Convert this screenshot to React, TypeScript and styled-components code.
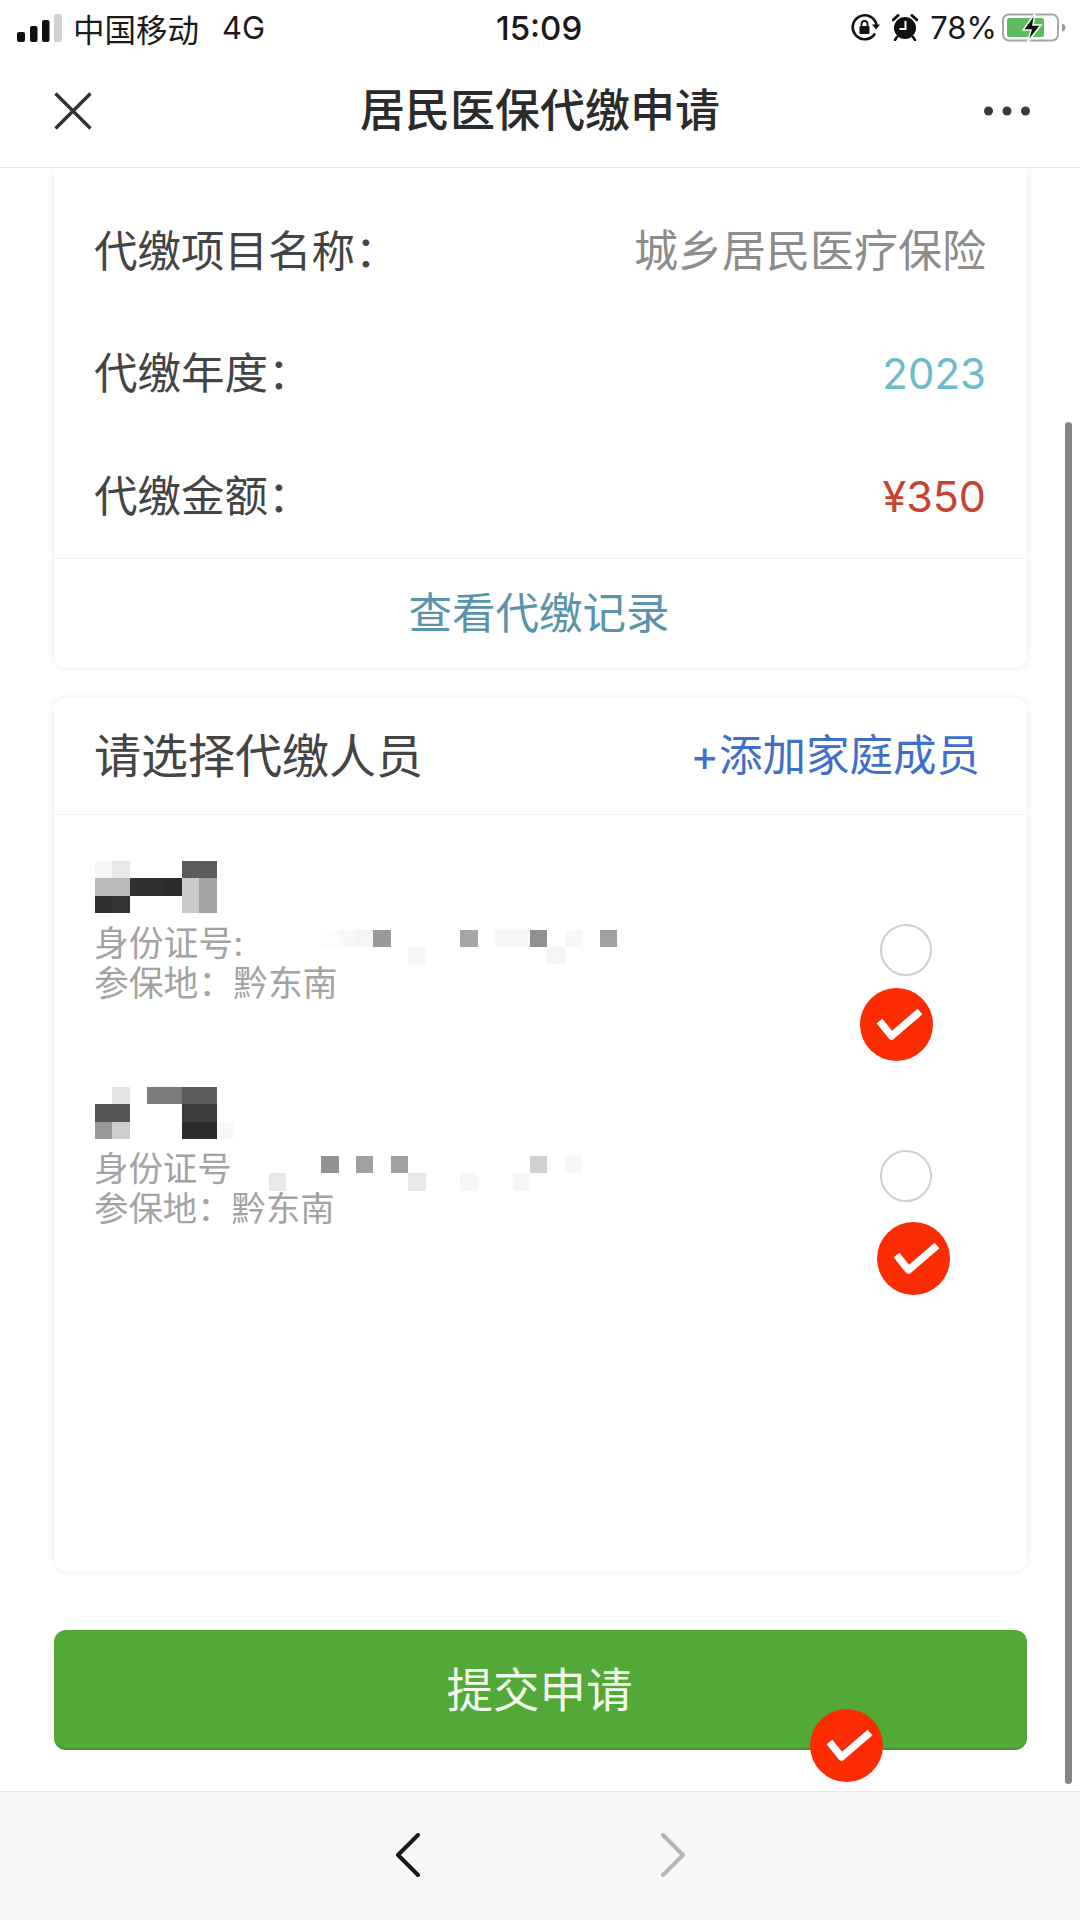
import styled, { createGlobalStyle } from "styled-components";

const GlobalStyle = createGlobalStyle`
  html, body {
    margin: 0;
    padding: 0;
    background: #fff;
  }
  * {
    box-sizing: border-box;
  }
`;

const Page = styled.div`
  position: relative;
  display: flex;
  flex-direction: column;
  width: 1080px;
  height: 1920px;
  overflow: hidden;
  background: #fff;
  font-family: Inter, "Noto Sans CJK SC", sans-serif;
`;

const StatusBar = styled.div`
  display: flex;
  align-items: center;
  height: 55px;
  padding: 0 14px 0 17px;
  color: #1a1a1a;
  font-size: 30px;
`;
const StatusLeft = styled.div`
  flex: 1;
  display: flex;
  align-items: center;
`;
const Carrier = styled.span`
  margin-left: 10px;
  font-size: 31.5px;
`;
const Network = styled.span`
  margin-left: 23px;
  font-size: 31px;
`;
const Clock = styled.span`
  position: absolute;
  left: 496px;
  font-size: 33px;
  font-weight: 500;
`;
const StatusRight = styled.div`
  display: flex;
  align-items: center;
`;
const Percent = styled.span`
  margin: 0 5px 0 12px;
  font-size: 31px;
`;

const NavBar = styled.div`
  display: flex;
  align-items: center;
  justify-content: space-between;
  height: 113px;
  padding: 0 50px 0 54px;
  border-bottom: 1px solid #e6e6e6;
`;
const NavTitle = styled.div`
  margin-left: 4px;
  padding-bottom: 8px;
  font-size: 45px;
  font-weight: 500;
  color: #2b2b2b;
`;

const Content = styled.div`
  flex: 1;
  display: flex;
  flex-direction: column;
  padding: 0 53px 0 54px;
`;
const Card = styled.div`
  background: #fff;
  border-radius: 0 0 12px 12px;
  box-shadow: 0 0 7px rgba(0, 0, 0, 0.09);
  clip-path: inset(0 -12px -12px -12px);
`;
const InfoRows = styled.div`
  padding: 19px 41px 3px 40px;
`;
const InfoRow = styled.div`
  display: flex;
  align-items: center;
  justify-content: space-between;
  height: 122.5px;
  font-size: 43.5px;
  color: #444;
`;
const InfoValue = styled.span<{ $color: string; $size?: number; $drop?: number }>`
  padding-top: ${(p) => p.$drop ?? 0}px;
  color: ${(p) => p.$color};
  font-size: ${(p) => p.$size ?? 44}px;
`;
const RecordLink = styled.div`
  display: flex;
  align-items: center;
  justify-content: center;
  height: 110px;
  padding: 0 3px 6px 0;
  border-top: 1px solid #f0f0f0;
  font-size: 43.5px;
  color: #5a94ab;
`;

const MemberCard = styled.div`
  display: flex;
  flex-direction: column;
  height: 873px;
  margin-top: 30px;
  background: #fff;
  border-radius: 12px;
  box-shadow: 0 0 7px rgba(0, 0, 0, 0.09);
`;
const MemberHeader = styled.div`
  display: flex;
  align-items: center;
  justify-content: space-between;
  height: 117px;
  padding: 0 47px 7px 40px;
  border-bottom: 1px solid #f7f4ea;
`;
const MemberTitle = styled.span`
  font-size: 47px;
  color: #444;
`;
const AddMember = styled.span`
  font-size: 43.5px;
  color: #3f6fcb;
`;
const MemberList = styled.div`
  display: flex;
  flex-direction: column;
  gap: 84px;
  padding: 46px 95px 0 41px;
`;
const MemberRow = styled.div`
  display: flex;
  align-items: center;
  justify-content: space-between;
`;
const MemberInfo = styled.div`
  display: flex;
  flex-direction: column;
`;
const MemberLines = styled.div<{ $size: number }>`
  margin: 10px 0 0 -1px;
  font-size: ${(p) => p.$size}px;
  line-height: 40px;
  color: #a3a3a3;
`;
const IdLine = styled.div`
  position: relative;
`;
const IdMosaic = styled.div`
  position: absolute;
  left: 1px;
  top: 7px;
  line-height: 0;
`;
const Radio = styled.div`
  width: 52px;
  height: 52px;
  margin-top: 36px;
  border: 2px solid #cfcfcf;
  border-radius: 50%;
`;

const SubmitButton = styled.div`
  display: flex;
  align-items: center;
  justify-content: center;
  height: 120px;
  margin-top: 59px;
  padding: 0 2px 4px 0;
  border-radius: 12px;
  border-bottom: 2px solid #4a8f36;
  background: #52a938;
  font-size: 46.5px;
  color: #f2f9ec;
`;

const BottomBar = styled.div`
  display: flex;
  align-items: center;
  gap: 239px;
  height: 129px;
  padding: 0 0 2px 395px;
  border-top: 1px solid #e9e9e9;
  background: #f7f7f7;
`;

const ScrollThumb = styled.div`
  position: absolute;
  left: 1065px;
  top: 422px;
  width: 7px;
  height: 1362px;
  border-radius: 4px;
  background: #858585;
`;

// red tick stamps sitting on top of the form
const Stamp = styled.svg<{ $left: number; $top: number }>`
  position: absolute;
  left: ${(p) => p.$left}px;
  top: ${(p) => p.$top}px;
  width: 73px;
  height: 73px;
`;

const CheckStamp = ({ left, top }: { left: number; top: number }) => (
  <Stamp $left={left} $top={top} viewBox="0 0 73 73">
    <circle cx="36.5" cy="36.5" r="36.5" fill="#fb2c02" />
    <path
      d="M19.5 33 L31.5 48 L60 23.5"
      fill="none"
      stroke="#fff"
      strokeWidth="7.5"
      strokeLinejoin="round"
    />
  </Stamp>
);

type Cell = [number, number, string];

// pixelated block used to hide personal data
const CELL = 17.4;
const Mosaic = ({ cols, rows, cells }: { cols: number; rows: number; cells: Cell[] }) => (
  <svg width={cols * CELL} height={rows * CELL} viewBox={`0 0 ${cols} ${rows}`} shapeRendering="crispEdges">
    {cells.map(([x, y, fill]) => (
      <rect key={`${x}-${y}`} x={x} y={y} width="1" height="1" fill={fill} />
    ))}
  </svg>
);

const nameOne: Cell[] = [
  [0, 0, "#f6f6f6"], [1, 0, "#e8e8e8"], [5, 0, "#5a5a5a"], [6, 0, "#5c5c5c"],
  [0, 1, "#b9b9b9"], [1, 1, "#b9b9b9"], [2, 1, "#303030"], [3, 1, "#303030"], [4, 1, "#2c2c2c"],
  [5, 1, "#cbcbcb"], [6, 1, "#a2a2a2"],
  [0, 2, "#303030"], [1, 2, "#323232"], [5, 2, "#cbcbcb"], [6, 2, "#a2a2a2"],
];
const nameTwo: Cell[] = [
  [1, 0, "#e4e4e4"], [3, 0, "#7c7c7c"], [4, 0, "#7c7c7c"], [5, 0, "#5e5e5e"], [6, 0, "#5e5e5e"],
  [0, 1, "#555"], [1, 1, "#555"], [5, 1, "#3c3c3c"], [6, 1, "#3c3c3c"],
  [0, 2, "#989898"], [1, 2, "#cdcdcd"], [5, 2, "#2c2c2c"], [6, 2, "#2c2c2c"], [7, 2, "#f8f8f8"],
];
const idOne: Cell[] = [
  [13, 0, "#fcfcfc"], [14, 0, "#f8f8f8"], [15, 0, "#f5f5f5"], [16, 0, "#9a9a9a"], [21, 0, "#a5a5a5"],
  [23, 0, "#f7f7f7"], [24, 0, "#f7f7f7"], [25, 0, "#919191"], [27, 0, "#f8f8f8"], [29, 0, "#a0a0a0"],
  [18, 1, "#f8f8f8"], [26, 1, "#f5f5f5"],
];
const idTwo: Cell[] = [
  [13, 0, "#929292"], [15, 0, "#a0a0a0"], [17, 0, "#a0a0a0"], [25, 0, "#d0d0d0"], [27, 0, "#f8f8f8"],
  [10, 1, "#e8e8e8"], [18, 1, "#e8e8e8"], [21, 1, "#f7f7f7"], [24, 1, "#f7f7f7"],
];

const SignalIcon = () => (
  <svg width="46" height="28" viewBox="0 0 46 28">
    <rect x="0" y="18" width="8" height="10" rx="2" fill="#111" />
    <rect x="13" y="12" width="7.5" height="16" rx="2" fill="#111" />
    <rect x="25" y="6" width="7.5" height="22" rx="2" fill="#111" />
    <rect x="37" y="0" width="8" height="28" rx="1.5" fill="#d2d2d2" />
  </svg>
);

const RotationLockIcon = () => (
  <svg width="30" height="30" viewBox="0 0 30 30">
    <path d="M25 20.5 A12 12 0 1 1 26.5 12" fill="none" stroke="#111" strokeWidth="2.6" />
    <path d="M22 11.5 H30 L26 16.5 Z" fill="#111" />
    <rect x="9.5" y="13" width="10" height="8" rx="1.2" fill="#111" />
    <path d="M11.5 13 V11 A3 3 0 0 1 17.5 11 V13" fill="none" stroke="#111" strokeWidth="1.8" />
  </svg>
);

const AlarmIcon = () => (
  <svg width="26" height="27" viewBox="0 0 26 27" style={{ marginLeft: 12 }}>
    <circle cx="13" cy="14" r="11" fill="#111" />
    <path d="M1 6 L6 1.5 M25 6 L20 1.5" stroke="#111" strokeWidth="3" strokeLinecap="round" />
    <path d="M5 23 L3 26 M21 23 L23 26" stroke="#111" strokeWidth="2.5" strokeLinecap="round" />
    <path d="M13.5 7 V15 H7.5" fill="none" stroke="#fff" strokeWidth="2" />
  </svg>
);

const BatteryIcon = () => (
  <svg width="64" height="30" viewBox="0 0 64 30">
    <rect x="1" y="1.5" width="55" height="26" rx="6" fill="none" stroke="#a6a6a6" strokeWidth="2" />
    <rect x="5" y="5" width="37" height="19" rx="2.5" fill="#5fbb5f" />
    <path d="M60 10.5 C62.5 11 63.5 13 63.5 14.5 C63.5 16 62.5 18 60 18.5 Z" fill="#9a9a9a" />
    <path
      d="M33 0.5 L21 17 H29 L25.5 29 L39 12 H31 Z"
      fill="#111"
      stroke="#fff"
      strokeWidth="1.5"
    />
  </svg>
);

const CloseIcon = () => (
  <svg width="38" height="38" viewBox="0 0 38 38">
    <path d="M1.5 1.5 L36.5 36.5 M36.5 1.5 L1.5 36.5" stroke="#333" strokeWidth="3.4" />
  </svg>
);

const MoreIcon = () => (
  <svg width="46" height="10" viewBox="0 0 46 10">
    <circle cx="4.5" cy="5" r="4.5" fill="#3a3a3a" />
    <circle cx="23" cy="5" r="4.5" fill="#3a3a3a" />
    <circle cx="41.5" cy="5" r="4.5" fill="#3a3a3a" />
  </svg>
);

const Chevron = ({ color, flip }: { color: string; flip?: boolean }) => (
  <svg width="26" height="44" viewBox="0 0 26 44">
    <path
      d={flip ? "M3 2 L23 22 L3 42" : "M23 2 L3 22 L23 42"}
      fill="none"
      stroke={color}
      strokeWidth="4"
      strokeLinecap="round"
      strokeLinejoin="round"
    />
  </svg>
);

const App = () => {
  return (
    <Page>
      <GlobalStyle />
      <StatusBar>
        <StatusLeft>
          <SignalIcon />
          <Carrier>中国移动</Carrier>
          <Network>4G</Network>
        </StatusLeft>
        <Clock>15:09</Clock>
        <StatusRight>
          <RotationLockIcon />
          <AlarmIcon />
          <Percent>78%</Percent>
          <BatteryIcon />
        </StatusRight>
      </StatusBar>

      <NavBar>
        <CloseIcon />
        <NavTitle>居民医保代缴申请</NavTitle>
        <MoreIcon />
      </NavBar>

      <Content>
        <Card>
          <InfoRows>
            <InfoRow>
              代缴项目名称：
              <InfoValue $color="#8c8c8c">城乡居民医疗保险</InfoValue>
            </InfoRow>
            <InfoRow>
              代缴年度：
              <InfoValue $color="#6bbccb" $size={42} $drop={5}>2023</InfoValue>
            </InfoRow>
            <InfoRow>
              代缴金额：
              <InfoValue $color="#c8432f" $size={43} $drop={5}>¥350</InfoValue>
            </InfoRow>
          </InfoRows>
          <RecordLink>查看代缴记录</RecordLink>
        </Card>

        <MemberCard>
          <MemberHeader>
            <MemberTitle>请选择代缴人员</MemberTitle>
            <AddMember>+添加家庭成员</AddMember>
          </MemberHeader>
          <MemberList>
            <MemberRow>
              <MemberInfo>
                <Mosaic cols={8} rows={3} cells={nameOne} />
                <MemberLines $size={34.8}>
                  <IdLine>
                    身份证号:
                    <IdMosaic>
                      <Mosaic cols={30} rows={2} cells={idOne} />
                    </IdMosaic>
                  </IdLine>
                  <div>参保地：黔东南</div>
                </MemberLines>
              </MemberInfo>
              <Radio />
            </MemberRow>
            <MemberRow>
              <MemberInfo>
                <Mosaic cols={8} rows={3} cells={nameTwo} />
                <MemberLines $size={34.4}>
                  <IdLine>
                    身份证号
                    <IdMosaic>
                      <Mosaic cols={30} rows={2} cells={idTwo} />
                    </IdMosaic>
                  </IdLine>
                  <div>参保地：黔东南</div>
                </MemberLines>
              </MemberInfo>
              <Radio />
            </MemberRow>
          </MemberList>
        </MemberCard>

        <SubmitButton>提交申请</SubmitButton>
      </Content>

      <BottomBar>
        <Chevron color="#1a1a1a" />
        <Chevron color="#b5b5b5" flip />
      </BottomBar>

      <ScrollThumb />
      <CheckStamp left={860} top={988} />
      <CheckStamp left={877} top={1222} />
      <CheckStamp left={810} top={1709} />
    </Page>
  );
};

export default App;
